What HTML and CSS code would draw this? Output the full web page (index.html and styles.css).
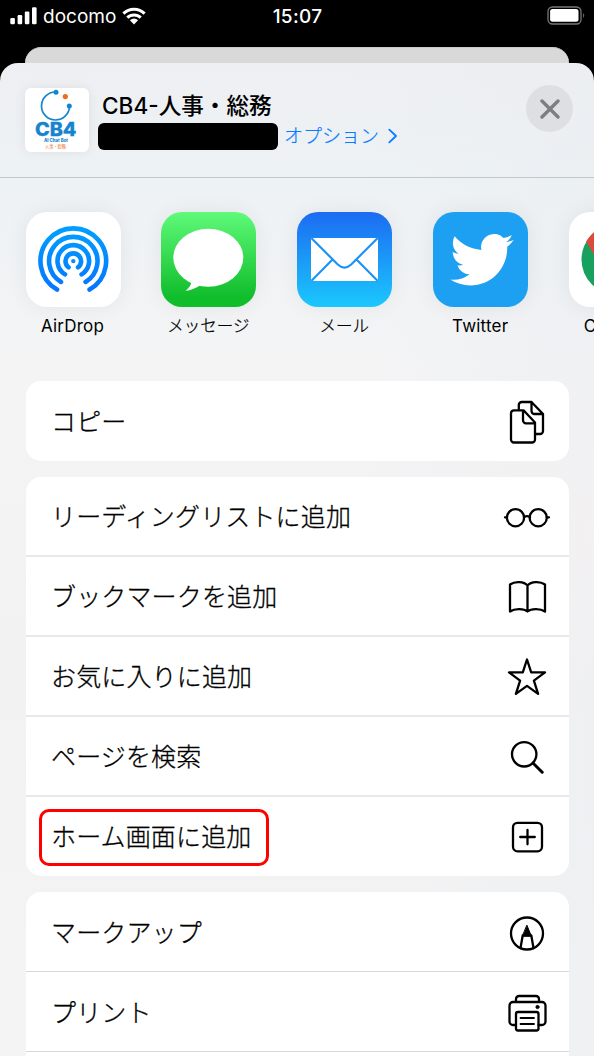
FILE: index.html
```html
<!DOCTYPE html>
<html lang="ja">
<head>
<meta charset="utf-8">
<title>共有</title>
<link rel="stylesheet" href="styles.css">
</head>
<body>
<div class="screen">
  <div class="status">
    <div class="carrier">
      <svg width="28" height="18" viewBox="0 0 28 18" fill="#fff"><rect x="0.3" y="11" width="4.6" height="6.3" rx="1.2"/><rect x="7.6" y="8" width="4.6" height="9.3" rx="1.2"/><rect x="14.8" y="4.5" width="4.6" height="12.8" rx="1.2"/><rect x="22" y="0.3" width="4.6" height="17" rx="1.2"/></svg>
      <span class="carrier-name">docomo</span>
      <svg width="24" height="18" viewBox="0 0 24 18"><path fill="none" stroke="#fff" stroke-width="3.1" d="M1.4 6.6a15.2 15.2 0 0 1 21.2 0M5.3 10.7a9.6 9.6 0 0 1 13.4 0"/><path fill="#fff" d="M7.9 13.2a6 6 0 0 1 8.2 0L12 17.5z"/></svg>
    </div>
    <div class="clock">15:07</div>
    <div class="battery"><svg width="39" height="20" viewBox="0 0 39 20"><rect x="1" y="1" width="33" height="17" rx="4.5" fill="none" stroke="#777" stroke-width="1.3"/><rect x="3.1" y="3.1" width="28.4" height="12.6" rx="2.5" fill="#fff"/><path d="M36.2 7q2 2.5 0 5z" fill="#777"/></svg></div>
  </div>
  <div class="behind"></div>
  <div class="sheet">
    <header class="header">
      <div class="site">
        <svg width="64" height="64" viewBox="0 0 64 64">
          <path d="M30.5 4A14 14 0 1 0 44.5 18" fill="none" stroke="#1484cf" stroke-width="1.7"/>
          <circle cx="31" cy="4.3" r="2.5" fill="#1484cf"/><circle cx="44.3" cy="18" r="2.5" fill="#1484cf"/><circle cx="40.3" cy="8.6" r="2.6" fill="#f16a21"/>
          <text class="logo-name" x="10" y="48.3" textLength="41.5" lengthAdjust="spacingAndGlyphs">CB4</text>
          <text class="logo-sub" x="19" y="53.6" textLength="24" lengthAdjust="spacingAndGlyphs">AI Chat Bot</text>
          <text class="logo-jp" x="20" y="60" textLength="21" lengthAdjust="spacingAndGlyphs">人事・総務</text>
        </svg>
      </div>
      <div class="heading">
        <div class="title">CB4-人事・総務</div>
        <div class="sub"><span class="redacted"></span><span class="options">オプション</span><svg width="10" height="16" viewBox="0 0 10 16"><path d="M1.3 1.6 8 8l-6.700 6.400" fill="none" stroke="#0a7aff" stroke-width="1.8" stroke-linecap="round" stroke-linejoin="round"/></svg></div>
      </div>
      <div class="close"><svg width="20" height="20" viewBox="0 0 20 20"><path d="m2 2 16 16M18 2 2 18" stroke="#7d7e82" stroke-width="3.4" stroke-linecap="round"/></svg></div>
    </header>
    <div class="apps">
      <div class="app">
        <div class="tile"><svg width="95" height="95" viewBox="0 0 95 95"><defs><linearGradient id="air" gradientUnits="userSpaceOnUse" x1="0" y1="14" x2="0" y2="80"><stop offset="0" stop-color="#00a0ff"/><stop offset="1" stop-color="#0575ff"/></linearGradient></defs><g fill="none" stroke="url(#air)" stroke-width="4.6" stroke-linecap="round"><path d="M31 77.600A32.800 32.800 0 1 1 63.600 77.600"/><path d="M35 69.900A24.200 24.200 0 1 1 59.600 69.900"/><path d="M39 62.400A15.800 15.800 0 1 1 55.600 62.400"/><path d="M42.500 55.300A7.800 7.800 0 1 1 52.100 55.300"/></g><circle cx="47.300" cy="49.100" r="2.200" fill="#078bff"/></svg></div>
        <div class="label">AirDrop</div>
      </div>
      <div class="app">
        <div class="tile messages"><svg width="95" height="95" viewBox="0 0 95 95" fill="#fff"><ellipse cx="47.300" cy="45.700" rx="35" ry="29"/><path d="M26 66c4 3 4.500 5 3.800 6.500-.8 2-2.800 4-5.300 6.300 5.500-.3 9.500-2.500 14.500-5.300z"/></svg></div>
        <div class="label label-jp">メッセージ</div>
      </div>
      <div class="app">
        <div class="tile mail"><svg width="95" height="95" viewBox="0 0 95 95"><rect x="14" y="26" width="67" height="43" rx="1.500" fill="#fff"/><g fill="none" stroke="#1a91f7" stroke-width="2.100"><path d="m14.500 26.200 26.300 26.300q6.700 6.200 13.400 0L80.500 26.200M35.500 47.500 14.500 68.800M59.500 47.500l21 21.300"/></g></svg></div>
        <div class="label label-jp">メール</div>
      </div>
      <div class="app">
        <div class="tile twitter"><svg width="95" height="95" viewBox="0 0 95 95"><path transform="translate(17.300 16) scale(2.640)" fill="#fff" d="M23.953 4.57a10 10 0 01-2.825.775 4.958 4.958 0 002.163-2.723c-.951.555-2.005.959-3.127 1.184a4.92 4.92 0 00-8.384 4.482C7.69 8.095 4.067 6.13 1.64 3.162a4.822 4.822 0 00-.666 2.475c0 1.71.87 3.213 2.188 4.096a4.904 4.904 0 01-2.228-.616v.06a4.923 4.923 0 003.946 4.827 4.996 4.996 0 01-2.212.085 4.936 4.936 0 004.604 3.417 9.867 9.867 0 01-6.102 2.105c-.39 0-.779-.023-1.17-.067a13.995 13.995 0 007.557 2.209c9.053 0 13.998-7.496 13.998-13.985 0-.21 0-.42-.015-.63A9.935 9.935 0 0024 4.59z"/></svg></div>
        <div class="label">Twitter</div>
      </div>
      <div class="app">
        <div class="tile"><svg width="95" height="95" viewBox="0 0 95 95"><circle cx="47.500" cy="47.500" r="35" fill="#18a05e"/><path d="M17.200 29.500a35 35 0 0 1 60.600 0H47.500L32.500 56z" fill="#dc4a3e"/><path d="M77.800 30a35 35 0 0 1-30.300 52.500L62.500 56 47.500 30z" fill="#ffcd42"/><circle cx="47.500" cy="47.500" r="16" fill="#fff"/><circle cx="47.500" cy="47.500" r="12.500" fill="#4a89f3"/></svg></div>
        <div class="label">Chrome</div>
      </div>
    </div>
    <div class="groups">
      <div class="card">
        <div class="row"><span>コピー</span><svg class="icon" viewBox="0 0 50 50"><path d="M16.800 12V8a3 3 0 0 1 3-3H29.500L41 17v17a3 3 0 0 1-3 3h-4.500M29.500 5v9a3 3 0 0 0 3 3H41"/><path d="M12 13.300h9.500L33 25.500v17a3 3 0 0 1-3 3H12a3 3 0 0 1-3-3V16.300a3 3 0 0 1 3-3zM21 13.300v10a3 3 0 0 0 3 3h9"/></svg></div>
      </div>
      <div class="card">
        <div class="row"><span>リーディングリストに追加</span><svg class="icon" viewBox="0 0 50 50"><circle cx="13.500" cy="25.700" r="8.600"/><circle cx="36.200" cy="25.700" r="8.600"/><path d="M22 25q3-1.700 6 0M3 25.300h2M44.700 25.300H47"/></svg></div>
        <div class="row"><span>ブックマークを追加</span><svg class="icon" viewBox="0 0 50 50"><path d="M25.500 13.500C22 9.500 13 9 8 12.500V39.500c5-3.500 14-3 17.500 0 3.500-3 12.500-3.500 17.500 0V12.500C38 9 29 9.500 25.500 13.500zV39.500"/></svg></div>
        <div class="row"><span>お気に入りに追加</span><svg class="icon" viewBox="0 0 50 50"><path d="m25 7.500 4.200 12.800 13.800.1-11.100 8.300 4.200 13.200L25 33.900l-11.100 8 4.200-13.200L7 20.400l13.800-.1z"/></svg></div>
        <div class="row"><span>ページを検索</span><svg class="icon" viewBox="0 0 50 50"><circle cx="22.200" cy="22.300" r="12.200"/><path d="m31.200 31.200 9 9" stroke-width="3"/></svg></div>
        <div class="row"><span class="highlight">ホーム画面に追加</span><svg class="icon" viewBox="0 0 50 50"><rect x="11" y="10.800" width="29" height="28.500" rx="4.500"/><path d="M25.500 17.800v14.500M18.200 25h14.600"/></svg></div>
      </div>
      <div class="card thin">
        <div class="row"><span>マークアップ</span><svg class="icon" viewBox="0 0 50 50"><circle cx="25" cy="25.500" r="16"/><path d="m18.500 40 2.200-12.500h8.600L31.500 40"/><path d="m25 17.500 4.300 10.500h-8.600z" fill="#000" stroke-width="1"/></svg></div>
        <div class="row"><span>プリント</span><svg class="icon" viewBox="0 0 50 50"><path d="M14 13V11a3 3 0 0 1 3-3H34a3 3 0 0 1 3 3v2M14 37h-3a3.500 3.500 0 0 1-3.500-3.500v-16A3.500 3.500 0 0 1 11 14H40a3.500 3.500 0 0 1 3.500 3.500v16A3.500 3.500 0 0 1 40 37H36.500"/><rect x="14" y="24" width="22.500" height="18.500" rx="2"/><path d="M18.500 30h13.500M18.500 36h13.500" stroke-width="1.800"/><circle cx="35.500" cy="19" r="1.700" fill="#000" stroke-width=".7"/></svg></div>
        <div class="row"></div>
      </div>
    </div>
  </div>
</div>
</body>
</html>
```
FILE: styles.css
```css
* { box-sizing: border-box; }
body { margin: 0; background: #000; font-family: Inter, "Noto Sans CJK JP", sans-serif; color: #000; }
svg { display: block; flex: none; }
.screen { width: 594px; height: 1056px; overflow: hidden; display: flex; flex-direction: column; background: #000; }
.status { height: 47px; flex: none; display: grid; grid-template-columns: 1fr auto 1fr; align-items: start; padding: 0 9px 0 10px; color: #fff; }
.carrier { display: flex; align-items: flex-start; padding-top: 7px; }
.carrier-name { font-size: 19px; line-height: 20px; width: 72px; margin: 0 7px 0 5px; font-weight: 400; }
.clock { font-size: 19px; font-weight: 500; line-height: 20px; padding-top: 7px; letter-spacing: .3px; }
.battery { justify-self: end; padding-top: 6px; margin-right: -1px; }
.behind { flex: none; height: 16px; margin: 0 25px; background: #d9d9da; border-top: 1px solid #c9c9ca; border-radius: 16px 16px 0 0; }
.sheet { flex: none; height: 993px; border-radius: 18px 18px 0 0; background: radial-gradient(circle at 600px 470px, #f3f1f2 0, transparent 200px), linear-gradient(90deg, transparent 60%, #e9edf177), linear-gradient(#eeeff2 0, #edf2f5 115px, #f4f4f5 300px, #f3f2f3 600px, #f4f4f4 100%); }
.header { height: 115px; border-bottom: 1px solid #c2c7cd; display: flex; align-items: flex-start; padding: 25px 20px 0 25px; }
.site { width: 64px; height: 64px; border-radius: 6px; background: #fff; box-shadow: 0 0 12px #00000012; overflow: hidden; }
.logo-name { font: 800 18.500px Inter, sans-serif; fill: #1484cf; stroke: #1484cf; stroke-width: .3px; }
.logo-sub { font: 800 4.400px Inter, sans-serif; fill: #1484cf; }
.logo-jp { font: 500 4.500px "Noto Sans CJK JP", sans-serif; fill: #f38a51; }
.heading { flex: 1; margin-left: 9px; }
.title { font-size: 22.600px; font-weight: 500; line-height: 32px; height: 35px; padding-top: 2px; margin-left: 4px; white-space: nowrap; }
.sub { display: flex; align-items: center; height: 27px; }
.redacted { width: 180px; height: 27px; background: #000; border-radius: 6px; }
.options { font-size: 19px; font-weight: 300; line-height: 26px; color: #0a7aff; margin: 0 9px 0 6px; -webkit-text-stroke: .2px #0a7aff; }
.sub svg { margin-top: -2px; }
.close { width: 47px; height: 47px; margin-top: -3px; border-radius: 50%; background: #dedfe3; display: grid; place-items: center; margin-right: 1px; }
.apps { height: 203px; padding: 34px 0 0 25.500px; display: flex; gap: 40.900px; }
.app { width: 95px; flex: none; }
.tile { width: 95px; height: 95px; border-radius: 21px; background: #fff; box-shadow: 0 0 22px #00000010; overflow: hidden; }
.messages { background: linear-gradient(#5ffa79, #10bd2b 90%); }
.mail { background: linear-gradient(#1c6bf1, #1bc8fd); }
.twitter { background: #1da0f2; }
.label { font-size: 17px; letter-spacing: .2px; line-height: 24px; margin-top: 7px; margin-left: -1px; text-align: center; white-space: nowrap; }
.label-jp { font-size: 16.500px; letter-spacing: 0; font-weight: 300; -webkit-text-stroke: .25px #000; }
.groups { padding: 0 25.500px; display: flex; flex-direction: column; gap: 16px; }
.card { background: #fff; border-radius: 15px; overflow: hidden; }
.row { height: 80px; padding: 2px 17px 0 25.500px; display: flex; align-items: center; justify-content: space-between; border-bottom: 2px solid #e9e9ea; font-size: 25px; letter-spacing: .15px; font-weight: 300; line-height: 36px; -webkit-text-stroke: .3px #000; }
.row:last-child { height: 79.500px; border-bottom: 0; }
.thin .row { border-bottom: 1px solid #d8d8d9; }
.icon { width: 50px; height: 50px; fill: none; stroke: #000; stroke-width: 2.300; stroke-linecap: round; stroke-linejoin: round; }
.highlight { border: 3px solid #f00; border-radius: 10px; width: 230px; height: 57px; margin-left: -12px; padding: 7px 0 0 9px; white-space: nowrap; }
```
